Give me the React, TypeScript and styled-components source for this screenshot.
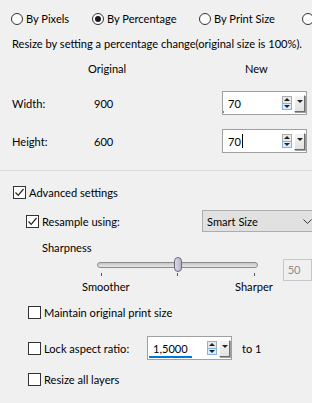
import React from "react";
import styled, { createGlobalStyle } from "styled-components";

const Global = createGlobalStyle`
  html, body { margin: 0; padding: 0; background: #f0f0f0; }
  * { box-sizing: border-box; }
`;

const Page = styled.div`
  width: 312px;
  height: 403px;
  overflow: hidden;
  background: #f0f0f0;
  font-family: Lato, "Liberation Sans", sans-serif;
  font-size: 11.1px;
  color: #000;
  position: relative;
`;

const RadioRow = styled.div`
  display: flex;
  height: 16px;
  margin-top: 11px;
  padding-left: 11px;
  align-items: center;
  white-space: nowrap;
`;

const RadioItem = styled.label<{ $w: number }>`
  display: flex;
  align-items: center;
  gap: 3px;
  width: ${(p) => p.$w}px;
  flex-shrink: 0;
  line-height: 16px;
`;

const RadioCircle = styled.span<{ $on?: boolean }>`
  width: 12px;
  height: 12px;
  border-radius: 50%;
  border: 1px solid #333;
  background: #fff;
  display: flex;
  align-items: center;
  justify-content: center;
  flex-shrink: 0;
  &::after {
    content: "";
    display: ${(p) => (p.$on ? "block" : "none")};
    width: 6px;
    height: 6px;
    border-radius: 50%;
    background: #1a1a1a;
  }
`;

const Hint = styled.div`
  margin-top: 9px;
  line-height: 15px;
  padding-left: 12px;
  white-space: nowrap;
  position: relative;
`;

const Table = styled.div`
  display: grid;
  grid-template-columns: 76px 134px 86px;
  padding-left: 12px;
  margin-top: 10px;
`;

const HeadCell = styled.div<{ $pl?: number }>`
  line-height: 15px;
  height: 15px;
  padding-left: ${(p) => p.$pl ?? 0}px;
`;

const Cell = styled.div<{ $pl?: number; $mt: number }>`
  display: flex;
  align-items: center;
  height: 24px;
  margin-top: ${(p) => p.$mt}px;
  padding-left: ${(p) => p.$pl ?? 0}px;
`;

const SpinBox = styled.div<{ $w: number }>`
  width: ${(p) => p.$w}px;
  height: 24px;
  border: 1px solid #a0a0a0;
  background: #fff;
  display: flex;
  align-items: center;
  position: relative;
  padding-left: 5px;
`;

const SpinText = styled.span`
  flex: 1;
  line-height: 15px;
  display: flex;
  align-items: center;
`;

const Caret = styled.span`
  display: inline-block;
  width: 1px;
  height: 14px;
  background: #000;
  margin-left: 1px;
`;

const FocusMark = styled.span`
  position: absolute;
  left: 0;
  bottom: 1px;
  width: 1px;
  height: 2px;
  background: #3c8ddc;
`;

const Underline = styled.span`
  position: absolute;
  left: 1px;
  bottom: 1px;
  width: 43px;
  height: 2px;
  background: #0078d7;
`;

const Arrows = styled.div`
  width: 10px;
  height: 14px;
  display: flex;
  flex-direction: column;
  margin-right: 2px;
`;

const ArrowHalf = styled.div<{ $hot?: boolean }>`
  flex: 1;
  border: 1px solid ${(p) => (p.$hot ? "#7eb4ea" : "#acacac")};
  background: ${(p) => (p.$hot ? "#dcecfc" : "#e8e8e8")};
  display: flex;
  align-items: center;
  justify-content: center;
  & + & { margin-top: -1px; }
`;

const Tri = styled.span<{ $down?: boolean }>`
  width: 0;
  height: 0;
  border-left: 3px solid transparent;
  border-right: 3px solid transparent;
  ${(p) =>
    p.$down
      ? "border-top: 3px solid #222;"
      : "border-bottom: 3px solid #222;"}
`;

const DropBtn = styled.div`
  width: 11px;
  height: 17px;
  margin-right: 1px;
  background: linear-gradient(#f4f4f4, #e2e2e2);
  border-left: 1px solid #fff;
  border-top: 1px solid #fff;
  border-right: 1px solid #6d6d6d;
  border-bottom: 1px solid #6d6d6d;
  box-shadow: 1px 1px 0 #a0a0a0;
  display: flex;
  justify-content: center;
  padding-top: 4px;
`;

const Spinner = ({ w, children }: { w: number; children: React.ReactNode }) => (
  <SpinBox $w={w}>
    {children}
    <Arrows>
      <ArrowHalf>
        <Tri />
      </ArrowHalf>
      <ArrowHalf $hot>
        <Tri $down />
      </ArrowHalf>
    </Arrows>
    <DropBtn>
      <Tri $down />
    </DropBtn>
  </SpinBox>
);

const Separator = styled.div`
  margin-top: 17px;
  height: 1px;
  background: #d9d9d9;
`;

const CheckRow = styled.div<{ $mt: number; $pl: number; $h?: number }>`
  display: flex;
  align-items: center;
  margin-top: ${(p) => p.$mt}px;
  padding-left: ${(p) => p.$pl}px;
  height: ${(p) => p.$h ?? 15}px;
  white-space: nowrap;
`;

const CheckLabel = styled.span<{ $w?: number }>`
  display: flex;
  align-items: center;
  gap: 3px;
  width: ${(p) => (p.$w ? `${p.$w}px` : "auto")};
  flex-shrink: 0;
`;

const Box = styled.span`
  width: 13px;
  height: 13px;
  border: 1px solid #333;
  background: #fff;
  display: flex;
  align-items: center;
  justify-content: center;
  flex-shrink: 0;
`;

const Check = ({ on }: { on?: boolean }) => (
  <Box>
    {on && (
      <svg width="11" height="11" viewBox="0 0 11 11">
        <path d="M1.5 5.5 L4.2 8.3 L9.5 2" fill="none" stroke="#222" strokeWidth="1.2" />
      </svg>
    )}
  </Box>
);

const Select = styled.div`
  margin-left: auto;
  width: 110px;
  height: 22px;
  background: #e1e1e1;
  border: 1px solid #adadad;
  border-right: none;
  display: flex;
  align-items: center;
  padding-left: 4px;
  position: relative;
`;

const Chevron = styled.svg`
  position: absolute;
  right: 0;
  top: 8px;
`;

const Label = styled.div<{ $mt: number; $pl: number }>`
  margin-top: ${(p) => p.$mt}px;
  padding-left: ${(p) => p.$pl}px;
  line-height: 15px;
`;

const SliderRow = styled.div`
  display: flex;
  height: 50px;
`;

const SliderArea = styled.div`
  margin-left: 82px;
  width: 190px;
  position: relative;
`;

const Track = styled.div`
  position: absolute;
  left: 15px;
  top: 7px;
  width: 161px;
  height: 6px;
  border-radius: 3px;
  border: 1px solid #8c8c8c;
  background: linear-gradient(#c6c6c6, #e6e6e6);
`;

const Thumb = styled.div`
  position: absolute;
  left: 92px;
  top: 2px;
  width: 8px;
  height: 15px;
  border-radius: 4px;
  border: 1px solid #6a6a7a;
  background: linear-gradient(90deg, #d8d8e6, #b8b8cc);
`;

const Tick = styled.div<{ $x: number }>`
  position: absolute;
  left: ${(p) => p.$x}px;
  top: 18px;
  width: 1px;
  height: 3px;
  background: #555;
`;

const SliderLabel = styled.span<{ $x: number }>`
  position: absolute;
  left: ${(p) => p.$x}px;
  top: 24px;
  line-height: 15px;
`;

const NumBox = styled.div`
  margin-left: 16px;
  margin-top: 4px;
  width: 30px;
  height: 22px;
  border: 1px solid #c8c8c8;
  background: #f0f0f0;
  color: #8a8a8a;
  padding-left: 4px;
  line-height: 20px;
`;

const ToLabel = styled.span`
  margin-left: 10px;
`;

export default function App() {
  return (
    <Page>
      <Global />
      <RadioRow>
        <RadioItem $w={81}>
          <RadioCircle />
          By Pixels
        </RadioItem>
        <RadioItem $w={107}>
          <RadioCircle $on />
          By Percentage
        </RadioItem>
        <RadioItem $w={103}>
          <RadioCircle />
          By Print Size
        </RadioItem>
        <RadioItem $w={20}>
          <RadioCircle />
        </RadioItem>
      </RadioRow>
      <Hint>Resize by setting a percentage change(original size is 100%).</Hint>
      <Table>
        <HeadCell />
        <HeadCell>Original</HeadCell>
        <HeadCell $pl={23}>New</HeadCell>
        <Cell $mt={15}>Width:</Cell>
        <Cell $mt={15} $pl={6}>900</Cell>
        <Cell $mt={15}>
          <Spinner w={85}>
            <SpinText>70</SpinText>
            <FocusMark />
          </Spinner>
        </Cell>
        <Cell $mt={14}>Height:</Cell>
        <Cell $mt={14} $pl={6}>600</Cell>
        <Cell $mt={14}>
          <Spinner w={85}>
            <SpinText>
              70
              <Caret />
            </SpinText>
          </Spinner>
        </Cell>
      </Table>
      <Separator />
      <CheckRow $mt={14} $pl={13}>
        <CheckLabel>
          <Check on />
          Advanced settings
        </CheckLabel>
      </CheckRow>
      <CheckRow $mt={10} $pl={26} $h={22}>
        <CheckLabel>
          <Check on />
          Resample using:
        </CheckLabel>
        <Select>
          Smart Size
          <Chevron width="9" height="6" viewBox="0 0 9 6">
            <path d="M0.5 0.5 L4.5 4.5 L8.5 0.5" fill="none" stroke="#333" strokeWidth="1" />
          </Chevron>
        </Select>
      </CheckRow>
      <Label $mt={8} $pl={42}>
        Sharpness
      </Label>
      <SliderRow>
        <SliderArea>
          <Track />
          <Thumb />
          <Tick $x={19} />
          <Tick $x={95} />
          <Tick $x={172} />
          <SliderLabel $x={0}>Smoother</SliderLabel>
          <SliderLabel $x={153}>Sharper</SliderLabel>
        </SliderArea>
        <NumBox>50</NumBox>
      </SliderRow>
      <CheckRow $mt={0} $pl={28}>
        <CheckLabel>
          <Check />
          Maintain original print size
        </CheckLabel>
      </CheckRow>
      <CheckRow $mt={16} $pl={28} $h={24}>
        <CheckLabel $w={119}>
          <Check />
          Lock aspect ratio:
        </CheckLabel>
        <Spinner w={85}>
          <SpinText>1,5000</SpinText>
          <Underline />
        </Spinner>
        <ToLabel>to 1</ToLabel>
      </CheckRow>
      <CheckRow $mt={12} $pl={28}>
        <CheckLabel>
          <Check />
          Resize all layers
        </CheckLabel>
      </CheckRow>
    </Page>
  );
}
